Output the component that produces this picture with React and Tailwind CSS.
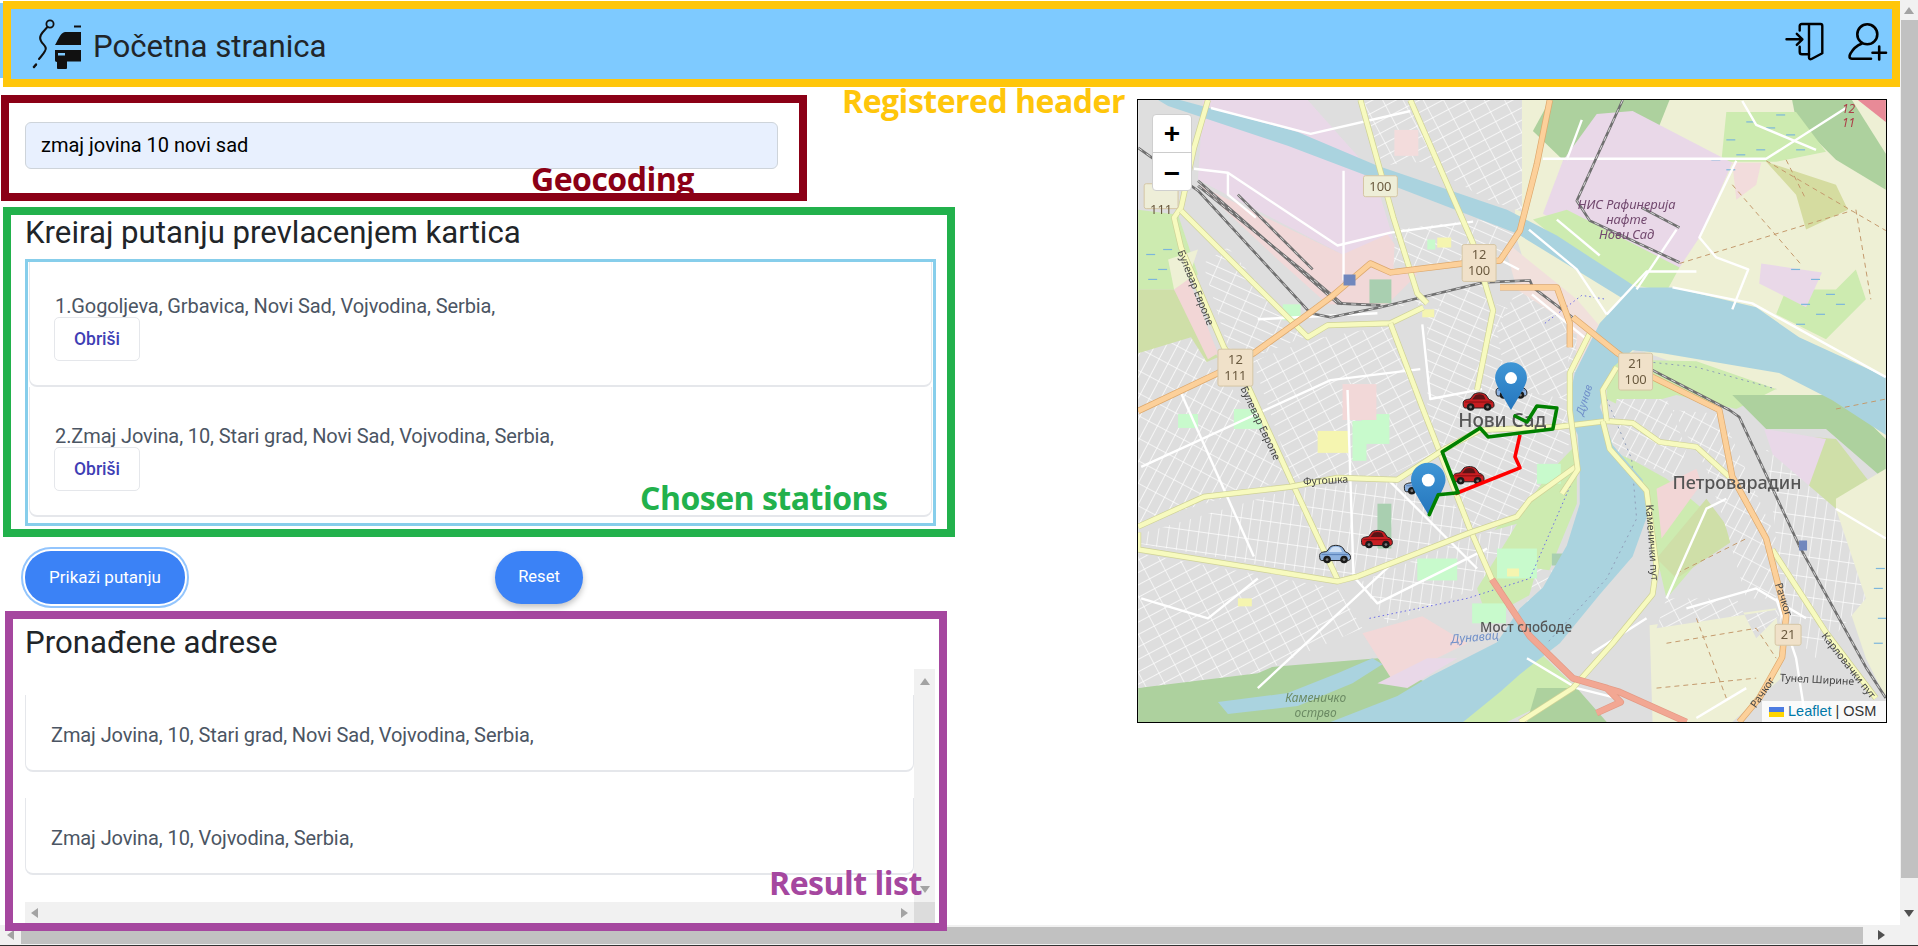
import React from 'react';

const label = { fontFamily: '"Noto Sans", sans-serif' };

// tile colours of the map
const areas = [
  ['#eef0d5', 'M370 0H750V340L640 300 500 250 430 300 380 140Z'],
  ['#add19e', 'M413 0H533L510 58 430 64 396 31Z'],
  ['#add19e', 'M656 0H716L750 54V90L700 60 660 20Z'],
  ['#cdebb0', 'M590 12H660L690 52 640 62H585Z'],
  ['#cdebb0', 'M650 190H700L720 170 730 200 690 240 640 215Z'],
  ['#d5dca0', 'M630 62L700 85 712 110 670 130 660 95Z'],
  ['#e9d8e8', 'M460 14L496 11 596 63 563 138 543 168 493 161 406 114 426 61Z'],
  ['#e9d8e8', 'M625 164L686 173 670 208 623 184Z'],
  ['#f2dcdc', 'M596 63H625L620 85 600 100Z'],
  ['#cdebb0', 'M396 120L430 110 543 168 530 192 470 180Z'],
  ['#e9d8e8', 'M65 0H170L236 74 256 140 205 155 60 80Z'],
  ['#f1d8d8', 'M60 85L205 155 250 135 280 175 250 205 190 205 140 160Z'],
  ['#cdebb0', 'M0 110L40 115 60 175 36 190H0Z'],
  ['#cfdfa8', 'M0 190H36L80 258 0 292Z'],
  ['#f2d6d6', 'M36 190L50 178 80 254 70 260Z'],
  ['#eef0d5', 'M30 160L60 150 50 180 36 190Z'],
  ['#f1e0dc', 'M366 140L440 200 470 235 430 280 380 190Z'],
  ['#cdebb0', 'M470 260L560 262 640 290 600 310 540 296 490 310 470 300Z'],
  ['#add19e', 'M596 296H705L750 340V382L690 330 630 330Z'],
  ['#cfdfa8', 'M640 335L700 340 735 385 700 410 660 390Z'],
  ['#e9d8e8', 'M628 330L690 340 670 395 650 395Z'],
  ['#eef0d5', 'M700 400L750 370V600L730 560 700 470Z'],
  ['#eef0d5', 'M513 527L640 510 645 580 596 624H516Z'],
  ['#cdebb0', 'M476 350L530 380 590 430 530 500 516 440 510 390Z'],
  ['#cfdfa8', 'M520 460L570 400 600 440 540 480Z'],
  ['#f2d6d6', 'M520 390L560 370 565 385 525 440Z'],
  ['#add19e', 'M0 590L120 570 240 560 300 590 200 624H0Z'],
  ['#cdebb0', 'M393 545L440 590 370 624H326Z'],
  ['#add19e', 'M400 590L440 590 470 624H390Z'],
  ['#f2d8d8', 'M225 535L285 518 330 545 255 582Z'],
  ['#e9d8e8', 'M240 585L290 560 320 560 270 590Z'],
  ['#cdebb0', 'M330 460L440 345 440 405 405 490 350 520Z'],
];

const blocks = [
  ['gridA', 'M175 0H385V112L350 100 285 62 240 66 223 0Z'],
  ['gridB', 'M258 130L340 120 390 130 360 160 256 170Z'],
  ['gridC', 'M0 254L53 238 80 281 10 311H0Z'],
  ['gridB', 'M65 164L90 148 166 238 116 258 90 248Z'],
  ['gridC', 'M0 315L85 275 150 380 0 425Z'],
  ['gridA', 'M115 262L175 240 253 226 305 350 250 378 155 380Z'],
  ['gridB', 'M290 210L360 205 440 235 436 340 380 420 335 430 290 320Z'],
  ['gridD', 'M0 436L155 390 300 380 333 430 220 476 200 480 0 445Z'],
  ['gridA', 'M0 455L200 490 225 530 120 575 0 590Z'],
  ['gridD', 'M222 484L335 438 380 425 340 490 250 525Z'],
  ['gridC', 'M470 350L480 300 530 300 550 350 540 380Z'],
  ['gridA', 'M400 470L470 480 420 545 380 540Z'],
  ['gridC', 'M536 311L585 315 640 440 650 500 610 500 590 430 570 370Z'],
  ['gridD', 'M630 350L700 410 730 500 680 560 640 520 640 440Z'],
  ['gridA', 'M530 500L600 500 620 540 650 510 520 530Z'],
  ['gridA', 'M360 230L380 190 433 225 430 300 370 290Z'],
  ['gridB', 'M245 208L345 185 356 215 290 205Z'],
];

const patches = [
  ['#c8facc', 96, 310, 28, 20], ['#c8facc', 224, 315, 28, 30], ['#f5f5b0', 180, 332, 32, 22],
  ['#c8facc', 40, 315, 20, 14], ['#a9cfb0', 240, 405, 14, 45], ['#c8facc', 215, 322, 14, 40],
  ['#f5f5b0', 100, 500, 14, 8], ['#c8facc', 280, 460, 40, 22], ['#c8facc', 360, 450, 40, 30],
  ['#f5f5b0', 370, 470, 12, 8], ['#c8facc', 335, 505, 34, 20], ['#f5f5b0', 285, 210, 12, 8],
  ['#f3dcdc', 257, 30, 24, 26], ['#c8facc', 290, 140, 8, 10], ['#f5f5b0', 300, 138, 14, 10],
  ['#a9cfb0', 232, 180, 22, 24], ['#c8facc', 145, 205, 18, 16], ['#c8facc', 400, 365, 24, 20],
  ['#a9cfb0', 415, 455, 24, 12], ['#f2d8d8', 205, 285, 34, 36], ['#f2d8d8', 440, 290, 16, 10],
];

const minorRoads = [
  'M73 8L173 34 273 11', 'M56 69L90 73 200 146 253 133 336 122', 'M206 71V181', 'M90 73V95L118 118',
  'M406 59H630L710 8', 'M600 61L563 138 580 158 612 170 596 210', 'M536 188L616 204 750 278',
  'M210 291L216 478', 'M3 368L193 281 283 270', 'M43 294L116 458', 'M216 478L240 505 350 450',
  'M3 500L70 520 120 480', 'M120 590L260 460', 'M430 60L445 20', 'M606 1L620 25 680 50',
  'M500 190L540 130', 'M470 215L510 172H560', 'M392 130L440 170 470 215', 'M530 500L570 410 590 400',
  'M550 510L620 490 670 520', 'M640 500L660 560 670 624', 'M455 555L510 520', 'M390 560L440 590 480 600',
  'M285 225L293 300 345 290', 'M343 150L382 170', 'M250 380L340 470', 'M560 620L610 590',
  'M120 220L240 214', 'M420 120L463 156', 'M700 410L750 440', 'M395 195L450 240',
];

const farmTracks = [
  'M630 61L750 131', 'M596 85L665 165', 'M543 164L716 111', 'M720 110L735 200', 'M650 60L670 100',
  'M530 545L620 530 640 560', 'M560 520L590 600', 'M520 590L620 580', 'M700 310L750 300', 'M540 475L610 440',
];

const wetlands = [
  [590, 40], [610, 22], [630, 28], [650, 35], [620, 50], [600, 55], [640, 15], [660, 50], [575, 60], [590, 70],
  [655, 170], [675, 180], [690, 195], [665, 205], [680, 215], [660, 225], [700, 205], [8, 155], [20, 170], [10, 180], [25, 150],
  [740, 470], [738, 490], [742, 520], [738, 545],
];

const yellowRoads = [
  'M70 0L56 48 43 108 36 118 43 148 86 248 106 278 153 381 200 481',
  'M43 111L170 238 190 226 253 224 286 208',
  'M223 0L256 118 280 194 290 204',
  'M273 0L336 144 356 211 340 291',
  'M253 224L286 311 333 431 355 481',
  'M0 428L66 398 153 388 200 379 260 381 306 351 343 331 420 328 470 322 496 324 523 343 560 348 593 378',
  'M0 434V451L200 483 220 478 333 434 380 418 393 401 440 367',
  'M466 322L473 350 510 392 520 468 516 496 476 545 436 590 383 624',
  'M636 451L690 534 740 600',
  'M453 234L433 274 433 311 441 371 425 395',
  'M480 268L466 291 470 322',
];

const rails = [
  'M0 48L60 91 173 214 193 218 243 208 346 183 393 181 396 188 483 254 593 311 603 318 663 447 730 569 750 600',
  'M60 81L200 204 243 206',
  'M486 0L440 101 453 121 543 163',
  'M60 86L170 175 205 205',
  'M100 95L175 170',
  'M505 108L543 128',
];

const riverUpper = 'M750 278L663 238 620 208 536 188 496 188 463 224 438 274 430 311 441 336 443 371 443 405 430 447 406 489 383 510 360 544 293 578 260 598 193 624';
const riverLower = 'L326 624 363 594 383 576 423 545 463 496 496 458 511 416 506 381 476 346 466 315 463 308 476 268 496 251 526 254 643 274 696 301 750 336Z';

const shields = [
  { x: 80, y: 250, w: 35, h: 37, lines: ['12', '111'], bg: '#f0e1c9' },
  { x: 6, y: 84, w: 34, h: 25, lines: ['', '111'], bg: '#eeeed8' },
  { x: 226, y: 76, w: 34, h: 21, lines: ['100'], bg: '#eeeed8' },
  { x: 325, y: 145, w: 34, h: 37, lines: ['12', '100'], bg: '#f0e1c9' },
  { x: 482, y: 254, w: 34, h: 37, lines: ['21', '100'], bg: '#f0e1c9' },
  { x: 639, y: 526, w: 26, h: 21, lines: ['21'], bg: '#f0e1c9' },
];

const Logo = () => (
  <svg width="56" height="56" viewBox="0 0 56 56" className="shrink-0 mt-[4px]">
    <circle cx="20" cy="6" r="3.6" fill="none" stroke="#111" strokeWidth="1.8" />
    <path d="M17.5 9C13 14 8 18 11 23 13 27 18 29 15 33 13.5 36 11.5 38 9 41" fill="none" stroke="#111" strokeWidth="2" strokeLinecap="round" />
    <path d="M4 49L6 46.5" stroke="#111" strokeWidth="2.4" strokeLinecap="round" />
    <path d="M44 8.5H51" stroke="#111" strokeWidth="2" />
    <path d="M35 14H51V27H25C28 22 30 17 32 15.5 33 14.5 34 14 35 14Z" fill="#111" />
    <path d="M25 32H51V43.5H37V50C37 50.500 36.500 51 36 51H28C27.500 51 27 50.500 27 50V44C25.500 44 25 43 25 42Z" fill="#111" />
    <rect x="28" y="35" width="7" height="2.5" fill="#7ecaff" />
  </svg>
);

const LoginIcon = () => (
  <svg width="40" height="42" viewBox="0 0 40 42" fill="none" stroke="#000" strokeWidth="2.4" strokeLinecap="round" strokeLinejoin="round">
    <path d="M2.500 19.300H18.300M12.800 13.800L18.400 19.300 12.800 24.900" />
    <path d="M15.700 10.500V6C15.700 4.800 16.500 4 17.700 4H36.500C37.700 4 38.300 4.800 38.300 6V33.300L27.500 39C26 39.600 25 38.800 25 37.500V5" />
    <path d="M15.700 26.700V32C15.700 33.500 16.500 34.300 18 34.300H25" />
  </svg>
);

const UserPlusIcon = () => (
  <svg width="45" height="42" viewBox="0 0 45 42" fill="none" stroke="#000" strokeWidth="2.6" strokeLinecap="round">
    <circle cx="23.300" cy="14.300" r="10" />
    <path d="M27 38.700H8C5 38.700 5 36 6.500 33.500 9.500 28 13 25.500 17.500 23.700" />
    <path d="M28.500 32.700H42M35.200 26.500V39.500" />
  </svg>
);

const Arrow = ({ dir, color = '#a3a3a3', className = '' }) => {
  const points = { up: '0,7 5,0 10,7', down: '0,0 10,0 5,7', left: '7,0 7,10 0,5', right: '0,0 0,10 7,5' };
  const horizontal = dir === 'left' || dir === 'right';
  return (
    <svg width={horizontal ? 7 : 10} height={horizontal ? 10 : 7} className={className}>
      <polygon points={points[dir]} fill={color} />
    </svg>
  );
};

const Pin = ({ x, y, h }) => {
  const s = h / 48;
  return (
    <g transform={`translate(${x - 16 * s} ${y - h}) scale(${s})`}>
      <path d="M16 0C7 0 0 7 0 16 0 23 9 36 16 48 23 36 32 23 32 16 32 7 25 0 16 0Z" fill="url(#pinBlue)" />
      <circle cx="16" cy="16" r="6" fill="#fff" />
    </g>
  );
};

const Car = ({ x, y, body, roof, glass }) => (
  <g transform={`translate(${x} ${y})`}>
    <path d="M1 11C1 8 4 7.500 8 7L12 2C16 0 21 0.500 24 3L27 7.500C30 8 32 10 32 13 32 15 31 16 29 16H3C1.500 16 1 14 1 11Z" fill={body} stroke="#222" strokeWidth="1" />
    <path d="M10 7.500L13.500 3C16 2 19 2 21.500 3.300L23.500 7.500Z" fill={glass} />
    <path d="M3 10H30" stroke={roof} strokeWidth="1.200" />
    <circle cx="8.500" cy="15" r="3.800" fill="#1a1a1a" />
    <circle cx="25.500" cy="15" r="3.800" fill="#1a1a1a" />
    <circle cx="8.500" cy="15" r="1.400" fill="#777" />
    <circle cx="25.500" cy="15" r="1.400" fill="#777" />
  </g>
);

const CityMap = () => (
  <svg viewBox="0 0 750 624" width="748" height="622" className="block" style={label}>
    <defs>
      <pattern id="gridA" width="18" height="11" patternUnits="userSpaceOnUse" patternTransform="rotate(-28)">
        <rect width="18" height="11" fill="#dedede" />
        <path d="M0 0H18M0 0V11" stroke="#fff" strokeWidth="1.300" />
      </pattern>
      <pattern id="gridB" width="20" height="10" patternUnits="userSpaceOnUse" patternTransform="rotate(24)">
        <rect width="20" height="10" fill="#dedede" />
        <path d="M0 0H20M0 0V10" stroke="#fff" strokeWidth="1.300" />
      </pattern>
      <pattern id="gridC" width="20" height="10" patternUnits="userSpaceOnUse" patternTransform="rotate(-62)">
        <rect width="20" height="10" fill="#dedede" />
        <path d="M0 0H20M0 0V10" stroke="#fff" strokeWidth="1.300" />
      </pattern>
      <pattern id="gridD" width="10" height="20" patternUnits="userSpaceOnUse" patternTransform="rotate(8)">
        <rect width="10" height="20" fill="#dedede" />
        <path d="M0 0H10M0 0V20" stroke="#fff" strokeWidth="1.300" />
      </pattern>
      <linearGradient id="pinBlue" x1="0" y1="0" x2="0" y2="1">
        <stop offset="0" stopColor="#3f96d6" />
        <stop offset="1" stopColor="#2576bd" />
      </linearGradient>
      <filter id="tiles"><feGaussianBlur stdDeviation="0.45" /></filter>
    </defs>

    <g filter="url(#tiles)">
      <rect width="750" height="624" fill="#dedede" />
      {areas.map(([fill, d], i) => <path key={i} d={d} fill={fill} />)}
      {blocks.map(([id, d], i) => <path key={i} d={d} fill={`url(#${id})`} />)}
      {patches.map(([fill, x, y, w, h], i) => <rect key={i} x={x} y={y} width={w} height={h} fill={fill} />)}

      {/* Dunav, kanal i rukavac */}
      <path d={riverUpper + riverLower} fill="#aad3df" />
      <path d="M20 0H42L160 32 240 66 370 110 420 136 500 188 484 198 380 134 240 80 150 46 30 6Z" fill="#aad3df" />
      <path d="M80 604L150 595 200 575 235 560 245 566 215 585 160 608 90 616Z" fill="#aad3df" />
      <path d="M505 262L560 268 640 290M470 300L495 360 500 420 470 480 410 545" fill="none" stroke="#8f9db8" strokeWidth="1" strokeDasharray="2 4" />
      <path d="M232 520L330 500 393 480 440 372M408 224L445 196 470 200" fill="none" stroke="#6a6ae6" strokeWidth="1" strokeDasharray="1.500 3" />

      {farmTracks.map((d, i) => <path key={i} d={d} fill="none" stroke="#c49a6c" strokeWidth="1" strokeDasharray="5 4" />)}
      {wetlands.map(([x, y], i) => <path key={i} d={`M${x} ${y}h9`} stroke="#7cb6dc" strokeWidth="1.200" />)}
      {minorRoads.map((d, i) => <path key={i} d={d} fill="none" stroke="#fff" strokeWidth="2.400" strokeLinejoin="round" />)}

      {rails.map((d, i) => (
        <g key={i} fill="none" strokeLinejoin="round">
          <path d={d} stroke="#6f6f6f" strokeWidth="2.600" />
          <path d={d} stroke="#d8d8d8" strokeWidth="1" strokeDasharray="5 5" />
        </g>
      ))}

      {yellowRoads.map((d, i) => (
        <g key={i} fill="none" strokeLinejoin="round">
          <path d={d} stroke="#cfd296" strokeWidth="6" />
          <path d={d} stroke="#f7fabf" strokeWidth="4.600" />
        </g>
      ))}

      <g fill="none" strokeLinejoin="round">
        <path d="M0 312L80 274 116 254 166 218 193 198 233 164 253 173 326 164 363 161 383 131 400 64 413 0M363 188H420L433 224V248M436 218L481 254 516 278 583 311 596 378 630 440 650 517 646 559 623 600 603 624" stroke="#dda86c" strokeWidth="6.400" />
        <path d="M0 312L80 274 116 254 166 218 193 198 233 164 253 173 326 164 363 161 383 131 400 64 413 0M363 188H420L433 224V248M436 218L481 254 516 278 583 311 596 378 630 440 650 517 646 559 623 600 603 624" stroke="#fcd09a" strokeWidth="5" />
        <path d="M355 481L393 538 436 580 483 594 550 624M436 580L470 590 484 604 460 615" stroke="#e39a85" strokeWidth="6.800" />
        <path d="M355 481L393 538 436 580 483 594 550 624M436 580L470 590 484 604 460 615" stroke="#f2a793" strokeWidth="5.400" />
      </g>

      <path d="M206 175H218V186H206Z M663 442H671V452H663Z" fill="#7087bd" />

      {shields.map((s, i) => (
        <g key={i}>
          <rect x={s.x} y={s.y} width={s.w} height={s.h} rx="2" fill={s.bg} stroke="#d5c6a5" />
          {s.lines.map((t, j) => (
            <text key={j} x={s.x + s.w / 2} y={s.y + 15 + j * 15.500} textAnchor="middle" fontSize="13" fill="#6b5a3f">{t}</text>
          ))}
        </g>
      ))}

      <path d="M722 0H750V22Z" fill="#e88a97" />
      <text x="706" y="13" fontSize="12" fontStyle="italic" fill="#ac3e48">12</text>
      <text x="706" y="27" fontSize="12" fontStyle="italic" fill="#ac3e48">11</text>

      <g textAnchor="middle" fontStyle="italic" fill="#734a6f" fontSize="13">
        <text x="490" y="109">НИС Рафинерија</text>
        <text x="490" y="124">нафте</text>
        <text x="490" y="139">Нови Сад</text>
      </g>
      <g textAnchor="middle" fontStyle="italic" fill="#6b8a63" fontSize="12">
        <text x="178" y="604">Каменичко</text>
        <text x="178" y="619">острво</text>
      </g>
      <text x="321" y="328" fontSize="19" fontWeight="500" fill="#555">Нови Сад</text>
      <text x="536" y="390" fontSize="18" fontWeight="500" fill="#555">Петроварадин</text>
      <text x="343" y="534" fontSize="13.500" fontWeight="500" fill="#555">Мост слободе</text>
      <text x="338" y="543" textAnchor="middle" fontSize="12" fontStyle="italic" fill="#6f8fc9" transform="rotate(-5 338 543)">Дунавац</text>
      <text x="451" y="302" textAnchor="middle" fontSize="11" fontStyle="italic" fill="#6f8fc9" transform="rotate(-72 451 302)">Дунав</text>
      <g fontSize="10.500" fill="#444" textAnchor="middle">
        <text x="188" y="385" transform="rotate(-3 188 381)">Футошка</text>
        <text x="58" y="192" transform="rotate(68 58 188)">Булевар Европе</text>
        <text x="123" y="328" transform="rotate(65 123 324)">Булевар Европе</text>
        <text x="516" y="448" transform="rotate(86 516 444)">Каменички пут</text>
        <text x="648" y="505" transform="rotate(72 648 501)">Рачког</text>
        <text x="626" y="598" transform="rotate(-55 626 594)">Рачког</text>
        <text x="681" y="585" transform="rotate(3 681 581)">Тунел Ширине</text>
        <text x="713" y="571" transform="rotate(52 713 567)">Карловачки пут</text>
      </g>
    </g>

    {/* vozila, markeri i putanje */}
    <Car x={181} y={446} body="#8fb3e0" roof="#5f86bd" glass="#cfe0f4" />
    <Car x={266} y={377} body="#8fb3e0" roof="#5f86bd" glass="#cfe0f4" />
    <Car x={358} y={281} body="#8fb3e0" roof="#5f86bd" glass="#cfe0f4" />
    <Car x={223} y={431} body="#c81e22" roof="#8f1014" glass="#5a1416" />
    <Car x={325} y={293} body="#c81e22" roof="#8f1014" glass="#5a1416" />
    <Car x={315} y={367} body="#c81e22" roof="#8f1014" glass="#5a1416" />
    <Pin x={291} y={416} h={52} />
    <Pin x={374} y={311} h={48} />
    <path d="M318 395L383 369 378 358 383 336" fill="none" stroke="#ff0000" strokeWidth="3.600" strokeLinejoin="round" />
    <path d="M292 416L301 396 321 394 305 353 343 329 351 338 416 330 420 309 400 307 390 323 378 317" fill="none" stroke="#008000" strokeWidth="3.600" strokeLinejoin="round" strokeLinecap="round" />
  </svg>
);

const StationCard = ({ text, className = '' }) => (
  <div className={`h-[130px] pl-[25px] pr-[24px] pt-[39px] rounded-b-lg border-b-2 border-x border-[#e5e7eb] ${className}`}>
    <p className="text-[20px] leading-5 text-[#4b5563] tracking-[-0.1px]">{text}</p>
    <button className="mt-[1px] -ml-[1px] w-[86px] h-11 bg-white border border-[#e5e7eb] rounded-[5px] text-[#3f3fb5] text-[17.500px] font-medium">Obriši</button>
  </div>
);

const ResultCard = ({ text }) => (
  <div className="h-[77px] mb-[26px] rounded-b-lg border-x border-b-2 border-[#e5e7eb] pl-[25px] pt-[30px] text-[20px] leading-5 text-[#4b5563] tracking-[-0.1px]">
    {text}
  </div>
);

const App = () => {
  return (
    <div className="relative w-[1918px] h-[946px] overflow-hidden flex flex-col bg-white font-['Roboto',sans-serif]">
      <div className="flex flex-1 min-h-0">
        <div className="relative z-10 w-[1900px] shrink-0">
          {/* Navigation Bar */}
          <div className="mt-[3px] h-[75px] bg-[#7ecaff] pl-[3px] flex items-start">
            <nav className="-mt-[2px] w-[1904px] h-[86px] border-8 border-[#ffc60b] bg-[#7ecaff] flex justify-between items-center">
              <div className="flex items-center pl-[19px] gap-[7px] text-[#212529] text-[31.200px]">
                <Logo />
                <span className="leading-8 pt-[6px]">Početna stranica</span>
              </div>
              <div className="flex items-center gap-[20px] pr-[3px] -mt-[6px]">
                <LoginIcon />
                <UserPlusIcon />
              </div>
            </nav>
          </div>

          <div className="flex items-start">
            <div className="w-[1137px] shrink-0 pt-[17px]">
              {/* Geocoding */}
              <section className="ml-[1px] w-[806px] h-[106px] border-8 border-[#8b0016] pl-4 pt-[19px]">
                <input
                  type="text"
                  readOnly
                  value="zmaj jovina 10 novi sad"
                  className="w-[753px] h-[47px] px-[15px] pb-[2px] bg-[#e8f0fe] border border-[#ced4da] rounded-[6px] text-[20px] text-black outline-none"
                />
              </section>

              {/* Chosen stations */}
              <section className="mt-[6px] ml-[3px] w-[952px] h-[330px] border-8 border-[#22b14c] pl-[14px]">
                <h2 className="h-[44px] pt-[2px] text-[31.200px] leading-[32px] text-[#212529]">Kreiraj putanju prevlacenjem kartica</h2>
                <div className="w-[911px] h-[267px] border-[3px] border-[#87ceeb] overflow-hidden px-[1px]">
                  <StationCard className="-mt-[5px]" text="1.Gogoljeva, Grbavica, Novi Sad, Vojvodina, Serbia," />
                  <StationCard text="2.Zmaj Jovina, 10, Stari grad, Novi Sad, Vojvodina, Serbia," />
                </div>
              </section>

              <div className="ml-[25px] mt-[14px] flex gap-[310px]">
                <button className="w-[160px] h-[53px] rounded-[26px] bg-[#3b82f6] text-white text-[17px] shadow-[0_0_0_2px_#ffffff,0_0_0_4px_#93c5fd]">Prikaži putanju</button>
                <button className="w-[88px] h-[53px] rounded-full bg-[#3b82f6] text-white text-[16.500px] shadow-[0_3px_6px_rgba(0,0,0,0.25)]">Reset</button>
              </div>

              {/* Result list */}
              <section className="mt-[7px] ml-[5px] w-[942px] h-[320px] border-8 border-[#a5479f] pl-3">
                <h2 className="h-[50px] pt-[8px] text-[31.200px] leading-[32px] text-[#212529]">Pronađene adrese</h2>
                <div className="w-[910px] h-[254px] grid grid-cols-[889px_21px] grid-rows-[233px_21px]">
                  <div className="pt-[26px] overflow-hidden">
                    <ResultCard text="Zmaj Jovina, 10, Stari grad, Novi Sad, Vojvodina, Serbia," />
                    <ResultCard text="Zmaj Jovina, 10, Vojvodina, Serbia," />
                  </div>
                  <div className="bg-[#f1f1f1] flex flex-col items-center justify-between py-[9px]">
                    <Arrow dir="up" />
                    <Arrow dir="down" />
                  </div>
                  <div className="bg-[#f1f1f1] flex items-center justify-between px-[6px]">
                    <Arrow dir="left" />
                    <Arrow dir="right" />
                  </div>
                  <div className="bg-[#dcdcdc]" />
                </div>
              </section>
            </div>

            {/* Map */}
            <div className="relative mt-[21px] w-[750px] h-[624px] border border-black shrink-0 overflow-hidden">
              <CityMap />
              <div className="absolute left-[14px] top-[14px] w-[40px] h-[77px] bg-white rounded-[4px] border border-[#cfcfcf] flex flex-col text-black font-['Liberation_Sans',sans-serif] font-bold">
                <div className="h-[38px] flex items-center justify-center text-[28px] border-b border-[#ccc]">+</div>
                <div className="flex-1 flex items-center justify-center text-[28px]">−</div>
              </div>
              <div className="absolute right-0 bottom-0 h-[21px] w-[124px] bg-white/85 flex items-center pl-[7px] text-[14.500px] text-[#333] font-['Liberation_Sans',sans-serif] whitespace-nowrap">
                <svg width="15" height="10" viewBox="0 0 15 10" className="mr-1">
                  <rect width="15" height="5" fill="#4c7be1" />
                  <rect y="5" width="15" height="5" fill="#ffd500" />
                </svg>
                <span className="text-[#0078a8]">Leaflet</span>
                <span className="mx-[4px]">|</span>
                <span>OSM</span>
              </div>
            </div>
          </div>

          {/* annotation labels over the page */}
          <div className="absolute left-[842px] top-[81px] text-[32px] leading-10 font-bold text-[#ffc60b] font-['Open_Sans',sans-serif] tracking-[-0.5px] whitespace-nowrap">Registered header</div>
          <div className="absolute left-[531px] top-[159px] text-[32px] leading-10 font-bold text-[#8b0016] font-['Open_Sans',sans-serif] tracking-[-0.5px]">Geocoding</div>
          <div className="absolute left-[640px] top-[478px] text-[32px] leading-10 font-bold text-[#22b14c] font-['Open_Sans',sans-serif] tracking-[-0.5px] whitespace-nowrap">Chosen stations</div>
          <div className="absolute left-[769px] top-[863px] text-[32px] leading-10 font-bold text-[#a5479f] font-['Open_Sans',sans-serif] tracking-[-0.5px] whitespace-nowrap">Result list</div>
        </div>

        {/* page scrollbar, vertical */}
        <div className="w-[18px] bg-[#f1f1f1] flex flex-col">
          <div className="h-[20px] flex items-center justify-center"><Arrow dir="up" /></div>
          <div className="h-[858px] ml-[1px] bg-[#c1c1c1]" />
          <div className="flex-1 flex items-end justify-center pb-[8px]"><Arrow dir="down" color="#505050" /></div>
        </div>
      </div>

      {/* page scrollbar, horizontal */}
      <div className="h-[20px] bg-[#f1f1f1] flex items-center shrink-0">
        <div className="w-[21px] flex justify-center"><Arrow dir="left" /></div>
        <div className="w-[1842px] h-[17px] bg-[#c1c1c1]" />
        <div className="w-[37px] flex justify-center"><Arrow dir="right" color="#505050" /></div>
      </div>
      <div className="h-px bg-[#333] shrink-0" />
    </div>
  );
};

export default App;
